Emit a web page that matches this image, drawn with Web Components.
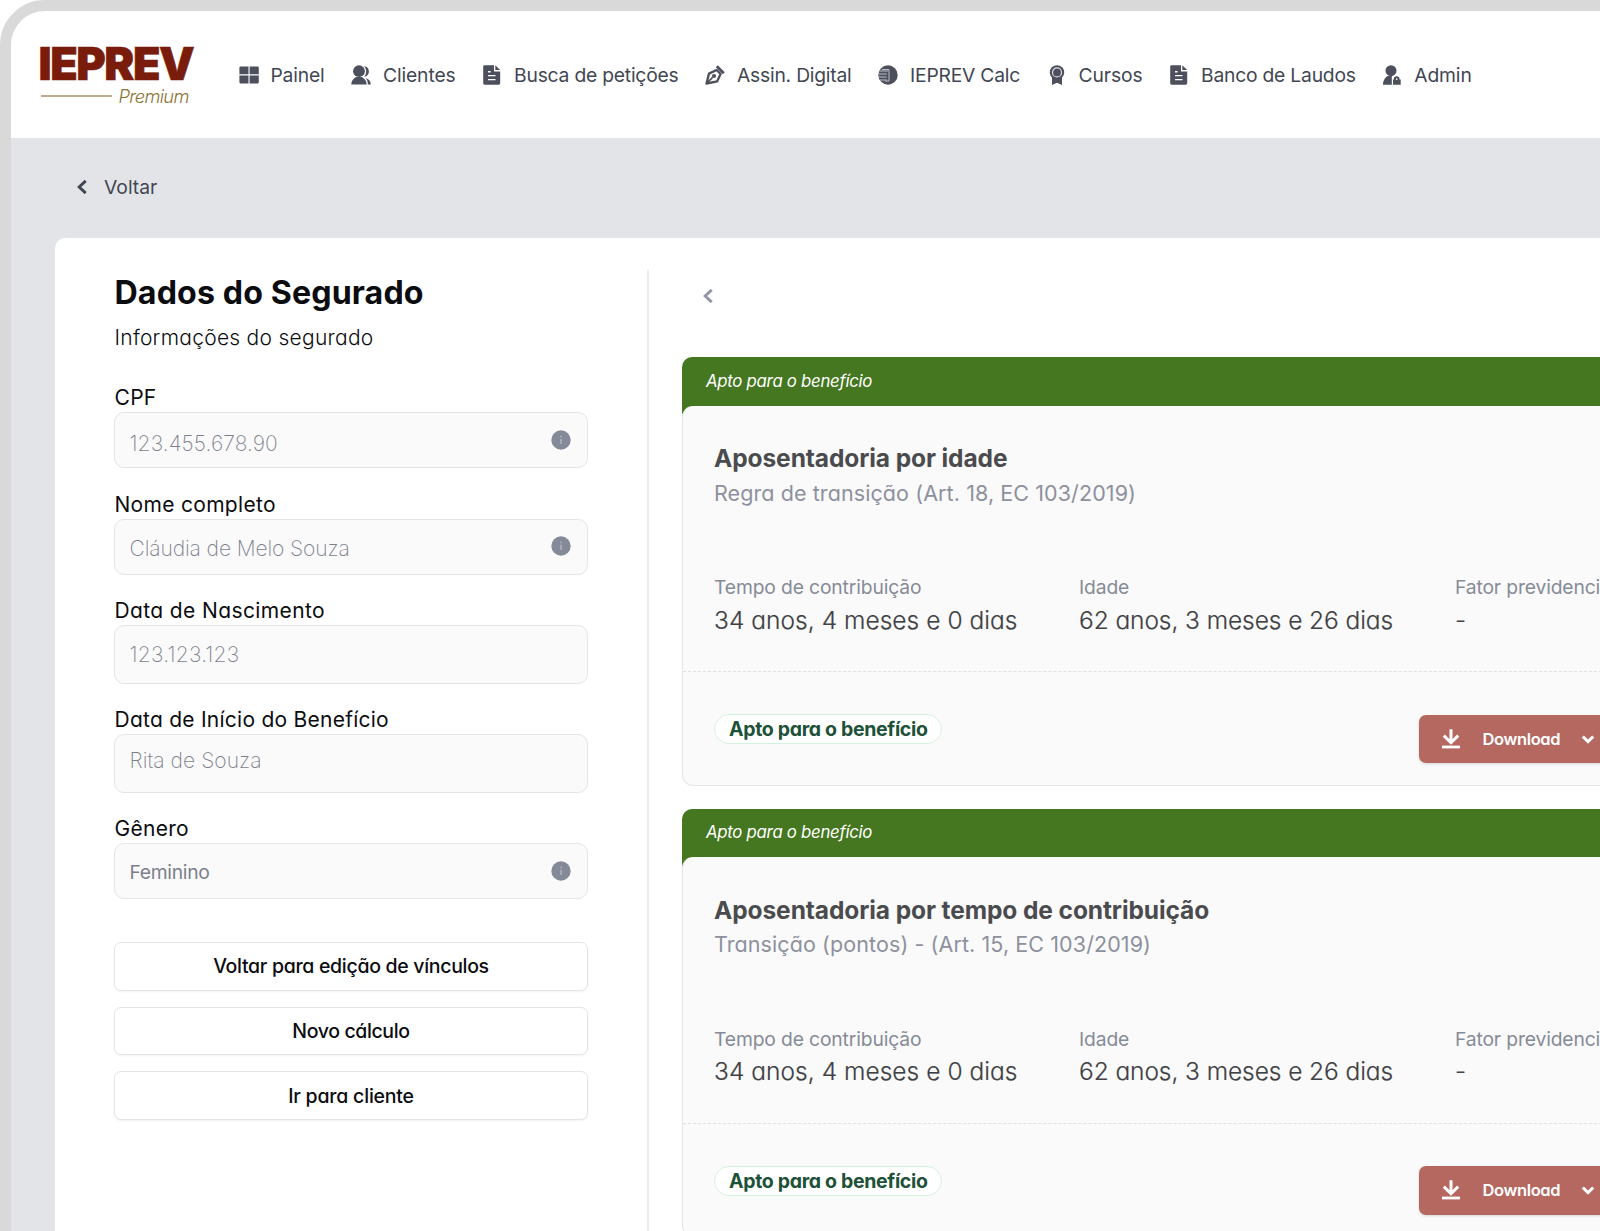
<!DOCTYPE html>
<html lang="pt-BR">
<head>
<meta charset="utf-8">
<title>IEPREV Premium</title>
<style>
    html, body { margin: 0; height: 1231px; overflow: hidden; background: #fff; }
    body { font-family: Inter, "Liberation Sans", sans-serif; color: #0b0c0f; }
</style>
</head>
<body>

<app-frame>
    <app-header slot="header">
        <nav-item icon="grid" style="--track: -.2px">Painel</nav-item>
        <nav-item icon="users" style="--track: -.12px">Clientes</nav-item>
        <nav-item icon="file">Busca de petições</nav-item>
        <nav-item icon="pen">Assin. Digital</nav-item>
        <nav-item icon="coin">IEPREV Calc</nav-item>
        <nav-item icon="award" style="--track: -.12px">Cursos</nav-item>
        <nav-item icon="file">Banco de Laudos</nav-item>
        <nav-item icon="admin" style="--track: -.12px">Admin</nav-item>
    </app-header>

    <back-link>Voltar</back-link>

    <main-panel>
        <insured-form slot="side">
            <span slot="title">Dados do Segurado</span>
            <span slot="subtitle">Informações do segurado</span>
            <data-field label="CPF" info style="--h: 56px; --top: 17px; --icon-top: 17px; --track: .1px">123.455.678.90</data-field>
            <data-field label="Nome completo" info style="--h: 56px; --top: 15px; --icon-top: 16.5px; --track: -.1px">Cláudia de Melo Souza</data-field>
            <data-field label="Data de Nascimento" style="--h: 58.5px; --top: 15px; --track: .25px; --label-track: .38px">123.123.123</data-field>
            <data-field label="Data de Início do Benefício" style="--h: 58.5px; --top: 12px; --track: .05px; --label-track: .25px">Rita de Souza</data-field>
            <data-field label="Gênero" info style="--h: 55.5px; --top: 13.5px; --icon-top: 16.5px; --size: 19.3px; --weight: 400; --track: -.3px">Feminino</data-field>
            <outline-button slot="actions" style="--track: -.31px">Voltar para edição de vínculos</outline-button>
            <outline-button slot="actions" style="--track: -.38px">Novo cálculo</outline-button>
            <outline-button slot="actions" style="--track: -.2px">Ir para cliente</outline-button>
        </insured-form>

        <benefit-card status="Apto para o benefício">
            <span slot="title">Aposentadoria por idade</span>
            <span slot="rule">Regra de transição (Art. 18, EC 103/2019)</span>
            <stat-item label="Tempo de contribuição">34 anos, 4 meses e 0 dias</stat-item>
            <stat-item label="Idade" style="--track: -.08px">62 anos, 3 meses e 26 dias</stat-item>
            <stat-item label="Fator previdenciário">-</stat-item>
        </benefit-card>

        <benefit-card status="Apto para o benefício">
            <span slot="title">Aposentadoria por tempo de contribuição</span>
            <span slot="rule">Transição (pontos) - (Art. 15, EC 103/2019)</span>
            <stat-item label="Tempo de contribuição">34 anos, 4 meses e 0 dias</stat-item>
            <stat-item label="Idade" style="--track: -.08px">62 anos, 3 meses e 26 dias</stat-item>
            <stat-item label="Fator previdenciário">-</stat-item>
        </benefit-card>
    </main-panel>
</app-frame>

<script>
// Small helper so every component gets its template and an open shadow root the same way.
function defineComponent(name, html, setup) {
    const template = document.createElement('template');
    template.innerHTML = html;

    customElements.define(name, class extends HTMLElement {
        constructor() {
            super();
            this.attachShadow({ mode: 'open' }).appendChild(template.content.cloneNode(true));
        }

        connectedCallback() {
            if (setup) setup(this, this.shadowRoot);
        }
    });
}

// Icon set, all drawn on a 20x20 grid
const icons = {
    grid: '<path d="M1.5 1.5h8v7.8H.4V2.6a1.1 1.1 0 0 1 1.1-1.1zM10.6 1.5h8.1a1.1 1.1 0 0 1 1.1 1.1v6.7h-9.2zM.4 10.4h9.1v8H1.5a1.1 1.1 0 0 1-1.1-1.1zM10.6 10.4h9.2v6.9a1.1 1.1 0 0 1-1.1 1.1h-8.1z"/>',
    users: '<circle cx="8" cy="6.2" r="5.9"/><path d="M.3 19.6c0-4 3-6.9 5.200-7.600h5c2.200.7 5.200 3.600 5.200 7.600zM13 1.200c3 .2 4.900 2.400 4.900 5.200s-1.900 5-4.700 5.300c2.700-3 2.700-7.500-.2-10.500zM14.500 12.900c3.200.9 5.300 3.200 5.300 6.700h-2.900c0-3-.8-5-2.400-6.700z"/>',
    file: '<path fill-rule="evenodd" d="M2.600.2h9.400v6.200h6.200v11.900a1.400 1.400 0 0 1-1.400 1.400H2.600a1.400 1.400 0 0 1-1.400-1.400V1.600A1.400 1.400 0 0 1 2.600.2zM6 6.100v1.300h2.600V6.100zM6 10v1.300h7.500V10zM6 13.900v1.300h7.500v-1.300z"/><path d="M13.300.2l4.900 4.900h-4.900z"/>',
    pen: '<g fill="none" stroke="currentColor" stroke-width="2.300" stroke-linejoin="round"><path d="M1.500 18.500L4 8.600l7.600-3.600 4 4-3.400 7.300z"/><path d="M11.800 1.200l7 7" stroke-width="2.700"/><path d="M1.600 18.400l6-6" stroke-width="1.600"/></g><circle cx="9" cy="11" r="2.100"/>',
    coin: '<circle cx="10" cy="10" r="9.700"/><path d="M1.500 6h8.500M.8 9h8M.9 12h7.500M2 15h7" stroke="#b9bdc6" stroke-width="1.100"/><path d="M4 4.500h7v11.500H7" fill="none" stroke="#b9bdc6"/>',
    award: '<path d="M5 11h10v9l-5-2.300L5 20z"/><circle cx="10" cy="7.400" r="7.200"/><circle cx="10" cy="7.400" r="4.500" fill="none" stroke="#d9dbe0" stroke-width="1.200"/>',
    admin: '<circle cx="9" cy="5.700" r="5.500"/><path d="M1 19.700c0-4.500 2.600-7.900 4.800-8.700h4v8.700zM11 14.600h.9v-.5a2.800 2.800 0 0 1 5.600 0v.5h1.200v5.100H11z"/><path d="M13.900 14.700V14a.8.8 0 0 1 1.600 0v.7z" fill="#fff"/>',
    info: '<circle cx="10" cy="10" r="9.700"/><path d="M9.400 5.800h1.300v1.400H9.400zM9.400 8.800h1.300v5.300H9.400z" fill="#b9bcc6"/>',
    left: '<path d="M13.700 3.900L7.200 10l6.500 6.100" fill="none" stroke="currentColor" stroke-width="2.900"/>',
    down: '<path d="M4.200 7.200L10 12.900l5.800-5.700" fill="none" stroke="currentColor" stroke-width="3.300"/>',
    download: '<path d="M10 .3v12M2.800 6.600L10 13.700l7.200-7.100" fill="none" stroke="currentColor" stroke-width="3"/><path d="M1 16.600h18v2.800H1z"/>'
};

defineComponent('ui-icon', `
    <style>
        :host { display: block; flex: none; width: 20px; height: 20px; }
        svg { display: block; width: 100%; height: 100%; fill: currentColor; }
    </style>
    <svg viewBox="0 0 20 20"></svg>
`, (host, root) => {
    root.querySelector('svg').innerHTML = icons[host.getAttribute('name')];
});

// Grey device frame around the whole application
defineComponent('app-frame', `
    <style>
        :host {
            display: block;
            box-sizing: border-box;
            width: 1720px;
            height: 1300px;
            overflow: hidden;
            border: 11px solid #d9d9d9;
            border-radius: 45px 0 0 0;
            background: #e3e4e8;
        }
    </style>
    <slot name="header"></slot>
    <slot></slot>
`);

defineComponent('brand-logo', `
    <style>
        :host { display: block; width: 160px; }
        .name {
            margin-left: 1.5px;
            color: #7a1c0b;
            font-size: 45px;
            font-weight: 900;
            line-height: 33px;
            letter-spacing: -1.45px;
            -webkit-text-stroke: .6px #7a1c0b;
        }
        .plan { display: flex; align-items: center; gap: 7px; margin: 6px 0 0 3.5px; }
        .rule { width: 71px; height: 2px; margin-top: 1px; background: #bcab88; }
        .plan span { color: #8c7433; font-size: 18.3px; font-style: italic; font-weight: 300; line-height: 20px; letter-spacing: -.7px; }
    </style>
    <div class="name">IEPREV</div>
    <div class="plan"><div class="rule"></div><span>Premium</span></div>
`);

defineComponent('app-header', `
    <style>
        :host {
            display: flex;
            align-items: flex-start;
            box-sizing: border-box;
            height: 127px;
            padding: 35.5px 0 0 26px;
            background: #fff;
        }
        nav { display: flex; gap: 27px; margin: 16.5px 0 0 41.5px; }
    </style>
    <brand-logo></brand-logo>
    <nav><slot></slot></nav>
`);

defineComponent('nav-item', `
    <style>
        :host {
            display: flex;
            align-items: center;
            gap: 12px;
            height: 24px;
            margin-right: -.5px;
            color: #414752;
            font-size: 19.3px;
            line-height: 24px;
            letter-spacing: var(--track, -.22px);
            white-space: nowrap;
        }
        ui-icon { color: #4b505c; }
    </style>
    <slot></slot>
`, (host, root) => {
    const icon = document.createElement('ui-icon');
    icon.setAttribute('name', host.getAttribute('icon'));
    root.prepend(icon);
});

defineComponent('back-link', `
    <style>
        :host {
            display: flex;
            align-items: center;
            gap: 12px;
            height: 100px;
            box-sizing: border-box;
            padding: 0 0 1.5px 61px;
            color: #414752;
            font-size: 19.3px;
        }
    </style>
    <ui-icon name="left"></ui-icon>
    <slot></slot>
`);

defineComponent('main-panel', `
    <style>
        :host {
            display: flex;
            box-sizing: border-box;
            width: 1640px;
            height: 1100px;
            margin-left: 44px;
            padding-top: 32px;
            border-radius: 10px 0 0 0;
            background: #fff;
        }
        .side { flex: none; box-sizing: border-box; width: 594px; padding: 1.5px 59px 0 59px; border-right: 2px solid #ebecee; }
        .results { flex: none; width: 966px; padding-left: 32.5px; }
        .pager { height: 87px; color: #9297a6; }
        .pager ui-icon { padding: 15.5px 0 0 16px; }
        .cards { display: flex; flex-direction: column; gap: 23px; }
    </style>
    <div class="side"><slot name="side"></slot></div>
    <div class="results">
        <div class="pager"><ui-icon name="left"></ui-icon></div>
        <div class="cards"><slot></slot></div>
    </div>
`);

defineComponent('insured-form', `
    <style>
        :host { display: block; }
        h1 { margin: 0; padding-left: .5px; font-size: 32.2px; font-weight: 700; line-height: 41px; letter-spacing: .11px; }
        p { margin: 11px 0 31.5px; padding-left: .5px; font-size: 21px; font-weight: 300; line-height: 28px; letter-spacing: .27px; font-feature-settings: "cv11"; }
        .fields { display: flex; flex-direction: column; gap: 21px; }
        .actions { display: flex; flex-direction: column; gap: 16px; margin-top: 43px; }
    </style>
    <h1><slot name="title"></slot></h1>
    <p><slot name="subtitle"></slot></p>
    <div class="fields"><slot></slot></div>
    <div class="actions"><slot name="actions"></slot></div>
`);

defineComponent('data-field', `
    <style>
        :host { display: block; }
        label { display: block; padding-left: .5px; font-size: 21px; line-height: 29px; letter-spacing: var(--label-track, .3px); font-feature-settings: "cv11"; }
        .box {
            display: flex;
            justify-content: space-between;
            align-items: flex-start;
            box-sizing: border-box;
            height: var(--h);
            margin-bottom: .5px;
            padding: 0 16px 0 14.5px;
            border: 1px solid #e4e5e8;
            border-radius: 10px;
            background: #fafafa;
        }
        .value {
            padding-top: var(--top);
            color: #7b7f8d;
            font-size: var(--size, 21px);
            font-weight: var(--weight, 200);
            line-height: 28px;
            letter-spacing: var(--track, 0);
        }
        ui-icon { margin-top: var(--icon-top); color: #858a98; }
        :host(:not([info])) ui-icon { display: none; }
    </style>
    <label></label>
    <div class="box">
        <div class="value"><slot></slot></div>
        <ui-icon name="info"></ui-icon>
    </div>
`, (host, root) => {
    root.querySelector('label').textContent = host.getAttribute('label');
});

defineComponent('outline-button', `
    <style>
        :host { display: block; }
        button {
            display: block;
            box-sizing: border-box;
            width: 100%;
            height: 48.7px;
            padding: 0;
            border: 1px solid #e4e5e7;
            border-radius: 7px;
            background: #fff;
            box-shadow: 0 1px 2px rgba(0, 0, 0, .05);
            color: #0b0c0f;
            font: 500 19.5px Inter, sans-serif;
            letter-spacing: var(--track);
            font-feature-settings: "cv11";
        }
    </style>
    <button><slot></slot></button>
`);

defineComponent('stat-item', `
    <style>
        :host { display: block; white-space: nowrap; }
        .label { color: #868b98; font-size: 19.3px; line-height: 29px; letter-spacing: -.14px; }
        .value { margin-top: 1.5px; color: #404144; font-size: 24.5px; font-weight: 300; line-height: 32px; letter-spacing: var(--track, .04px); font-feature-settings: "cv11"; -webkit-text-stroke: .2px; }
    </style>
    <div class="label"></div>
    <div class="value"><slot></slot></div>
`, (host, root) => {
    root.querySelector('.label').textContent = host.getAttribute('label');
});

defineComponent('status-badge', `
    <style>
        :host {
            display: block;
            box-sizing: border-box;
            height: 30px;
            padding: 0 13px 0 14px;
            border: 1px solid #d3f3dc;
            border-radius: 15px;
            background: #fff;
            color: #1d5138;
            font-size: 19.5px;
            font-weight: 700;
            line-height: 29px;
            letter-spacing: -.33px;
            font-feature-settings: "cv11";
        }
    </style>
    <slot></slot>
`);

defineComponent('download-button', `
    <style>
        :host { display: block; margin-top: .5px; }
        button {
            display: flex;
            align-items: center;
            box-sizing: border-box;
            width: 196px;
            height: 48.5px;
            padding: 0 0 0 22px;
            border: 0;
            border-radius: 7px;
            background: #b5685f;
            box-shadow: 0 1px 3px rgba(0, 0, 0, .15);
            color: #fff;
            font: 600 16.5px Inter, sans-serif;
            letter-spacing: -.36px;
            font-feature-settings: "cv11";
        }
        span { width: 95px; padding-left: 22px; text-align: left; }
        ui-icon:last-child { width: 18px; height: 18px; margin-left: 1px; }
    </style>
    <button><ui-icon name="download"></ui-icon><span>Download</span><ui-icon name="down"></ui-icon></button>
`);

// Retirement rule card: green status strip on top, rounded body over it
defineComponent('benefit-card', `
    <style>
        :host {
            display: block;
            border-radius: 10px;
            background: linear-gradient(#457620 57px, transparent 57px);
        }
        .status {
            height: 48.5px;
            box-sizing: border-box;
            padding: 11.5px 24.5px 0;
            color: #fff;
            font-size: 16.8px;
            font-style: italic;
            line-height: 24px;
            letter-spacing: -.28px;
            font-feature-settings: "cv11";
        }
        .body { box-sizing: border-box; height: 380px; border: 1px solid #e3e6e9; border-top-color: #fafafa; border-radius: 11px; background: #fafafa; }
        h2 { margin: 0; padding: 35.5px 0 0 31.5px; color: #4a4b4e; font-size: 24.5px; font-weight: 700; line-height: 32px; letter-spacing: -.09px; }
        .rule { padding: 2.5px 0 0 31.5px; color: #8d919e; font-size: 21.5px; line-height: 32px; letter-spacing: .09px; font-weight: 400; font-feature-settings: "cv11"; }
        .stats { display: grid; grid-template-columns: 365px 376px auto; padding: 64.5px 0 35.5px 31.5px; }
        footer { display: flex; justify-content: space-between; align-items: flex-start; padding: 42px 32px 0 31.5px; border-top: 1px dashed #dfe1e4; }
    </style>
    <div class="status"></div>
    <div class="body">
        <h2><slot name="title"></slot></h2>
        <div class="rule"><slot name="rule"></slot></div>
        <div class="stats"><slot></slot></div>
        <footer>
            <status-badge></status-badge>
            <download-button></download-button>
        </footer>
    </div>
`, (host, root) => {
    root.querySelector('.status').textContent = host.getAttribute('status');
    root.querySelector('status-badge').textContent = host.getAttribute('status');
});
</script>
</body>
</html>
